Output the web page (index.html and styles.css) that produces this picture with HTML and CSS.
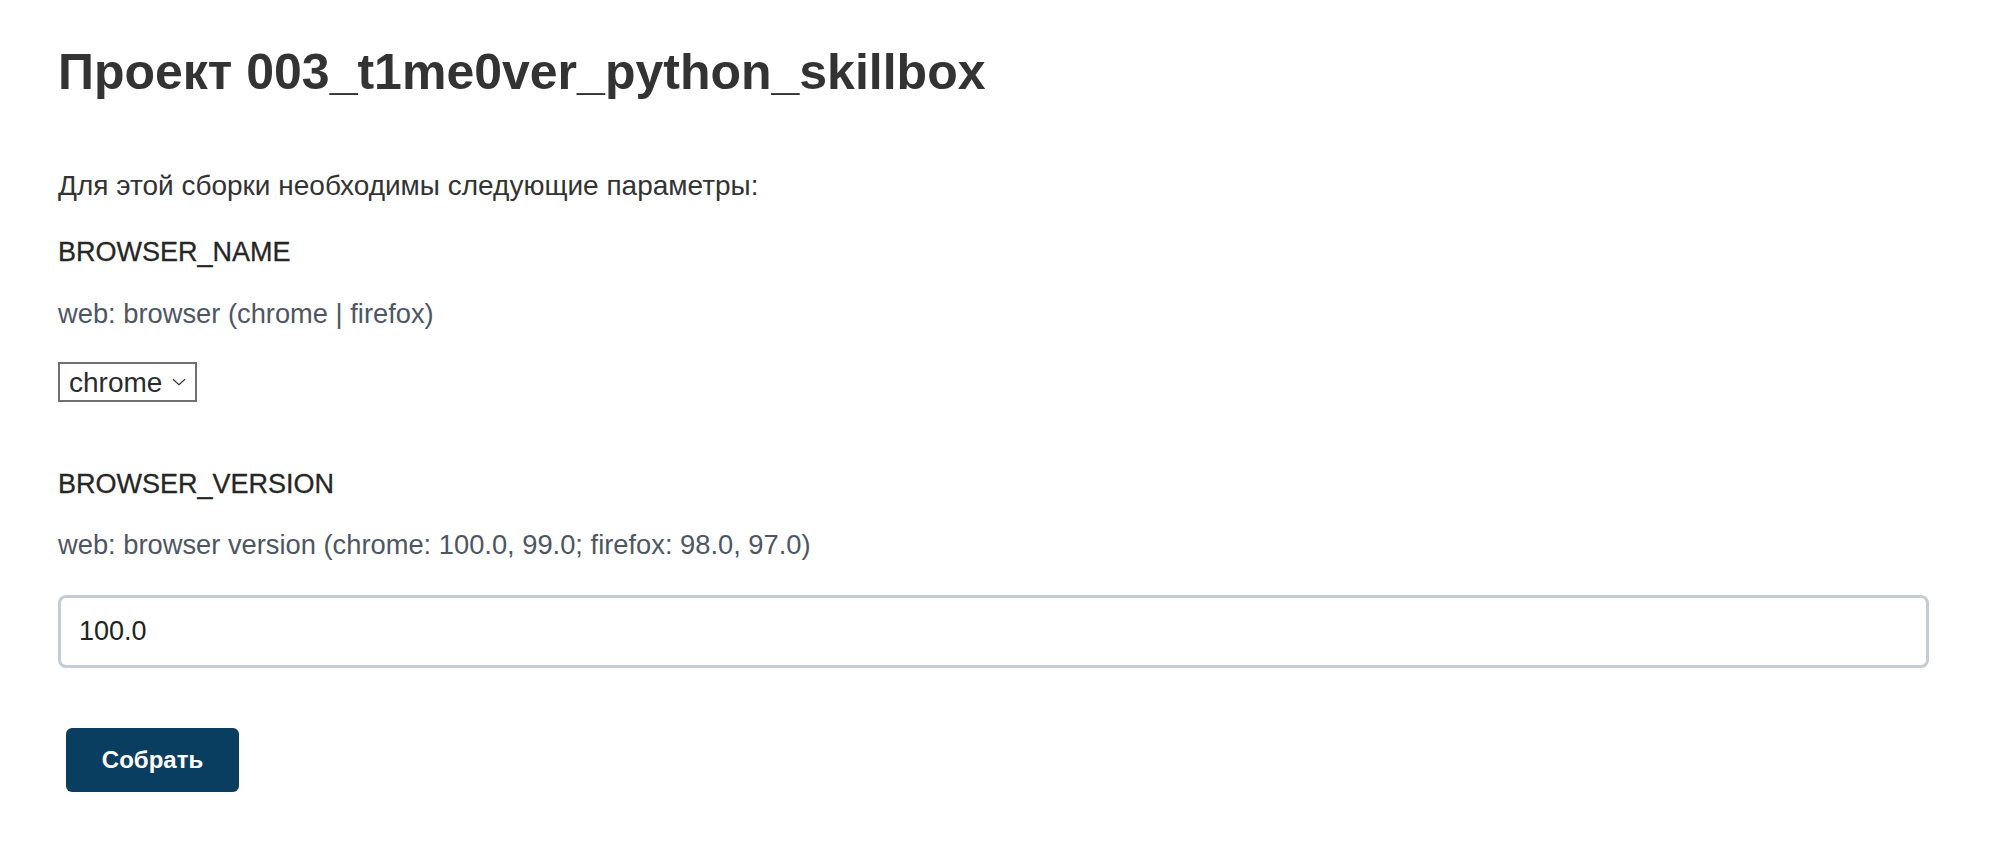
FILE: index.html
```html
<!DOCTYPE html>
<html lang="ru">
<head>
<meta charset="utf-8">
<title>Проект 003_t1me0ver_python_skillbox</title>
<link rel="stylesheet" href="styles.css">
</head>
<body>
<main class="page">
  <h1 class="title">Проект 003_t1me0ver_python_skillbox</h1>
  <p class="intro">Для этой сборки необходимы следующие параметры:</p>
  <form class="params">
    <div class="param">
      <h3 class="param-name">BROWSER_NAME</h3>
      <div class="param-desc">web: browser (chrome | firefox)</div>
      <div class="select-box">
        <select class="select" name="BROWSER_NAME">
          <option>chrome</option>
          <option>firefox</option>
        </select>
        <svg class="chevron" width="14" height="8" viewBox="0 0 14 8" aria-hidden="true"><path d="M1 1.2 L7 6.8 L13 1.2" fill="none" stroke="#333" stroke-width="1.2"/></svg>
      </div>
    </div>
    <div class="param param-second">
      <h3 class="param-name">BROWSER_VERSION</h3>
      <div class="param-desc">web: browser version (chrome: 100.0, 99.0; firefox: 98.0, 97.0)</div>
      <input class="text-input" type="text" name="BROWSER_VERSION" value="100.0">
    </div>
    <button class="build-btn" type="button">Собрать</button>
  </form>
</main>
</body>
</html>
```
FILE: styles.css
```css
html, body {
  margin: 0;
  padding: 0;
  background: #ffffff;
}

body {
  font-family: "Liberation Sans", Arial, Helvetica, sans-serif;
  color: #333333;
}

.page {
  padding: 42px 69px 0 58px;
  display: flex;
  flex-direction: column;
}

.title {
  margin: 0;
  font-size: 50px;
  line-height: 60px;
  font-weight: 700;
  color: #333333;
}

.intro {
  margin: 68px 0 0;
  font-size: 28px;
  line-height: 32px;
  color: #333333;
}

.params {
  display: flex;
  flex-direction: column;
  align-items: flex-start;
}

.param {
  display: flex;
  flex-direction: column;
  align-items: flex-start;
  width: 100%;
}

.param-name {
  margin: 34px 0 0;
  font-size: 27px;
  line-height: 32px;
  font-weight: 400;
  color: #262626;
  -webkit-text-stroke: 0.3px #262626;
}

.param-second .param-name {
  margin-top: 66px;
}

.param-desc {
  margin-top: 30px;
  font-size: 27.3px;
  line-height: 32px;
  color: #4e5663;
}

.param-second .param-desc {
  margin-top: 29px;
}

.select-box {
  margin-top: 32px;
  position: relative;
  display: inline-flex;
  align-items: center;
  height: 40px;
  box-sizing: border-box;
  border: 2px solid #707070;
  background: #ffffff;
}

.select {
  -webkit-appearance: none;
  appearance: none;
  border: none;
  outline: none;
  background: transparent;
  font-family: "Liberation Sans", Arial, sans-serif;
  font-size: 28px;
  color: #2b2b2b;
  padding: 0 32px 0 9px;
  height: 36px;
  margin: 0;
}

.chevron {
  position: absolute;
  right: 9px;
  top: 14px;
  pointer-events: none;
}

.text-input {
  margin-top: 34px;
  width: 100%;
  height: 73px;
  box-sizing: border-box;
  border: 3px solid #c4cdd4;
  border-radius: 8px;
  padding: 0 18px;
  font-family: "Liberation Sans", Arial, sans-serif;
  font-size: 27px;
  color: #222222;
  background: #ffffff;
  outline: none;
}

.build-btn {
  margin: 60px 0 0 8px;
  width: 173px;
  height: 64px;
  border: none;
  border-radius: 6px;
  background: #0a3e60;
  color: #ffffff;
  font-family: "Liberation Sans", Arial, sans-serif;
  font-size: 24px;
  font-weight: 700;
  padding: 0;
  cursor: pointer;
}
```
